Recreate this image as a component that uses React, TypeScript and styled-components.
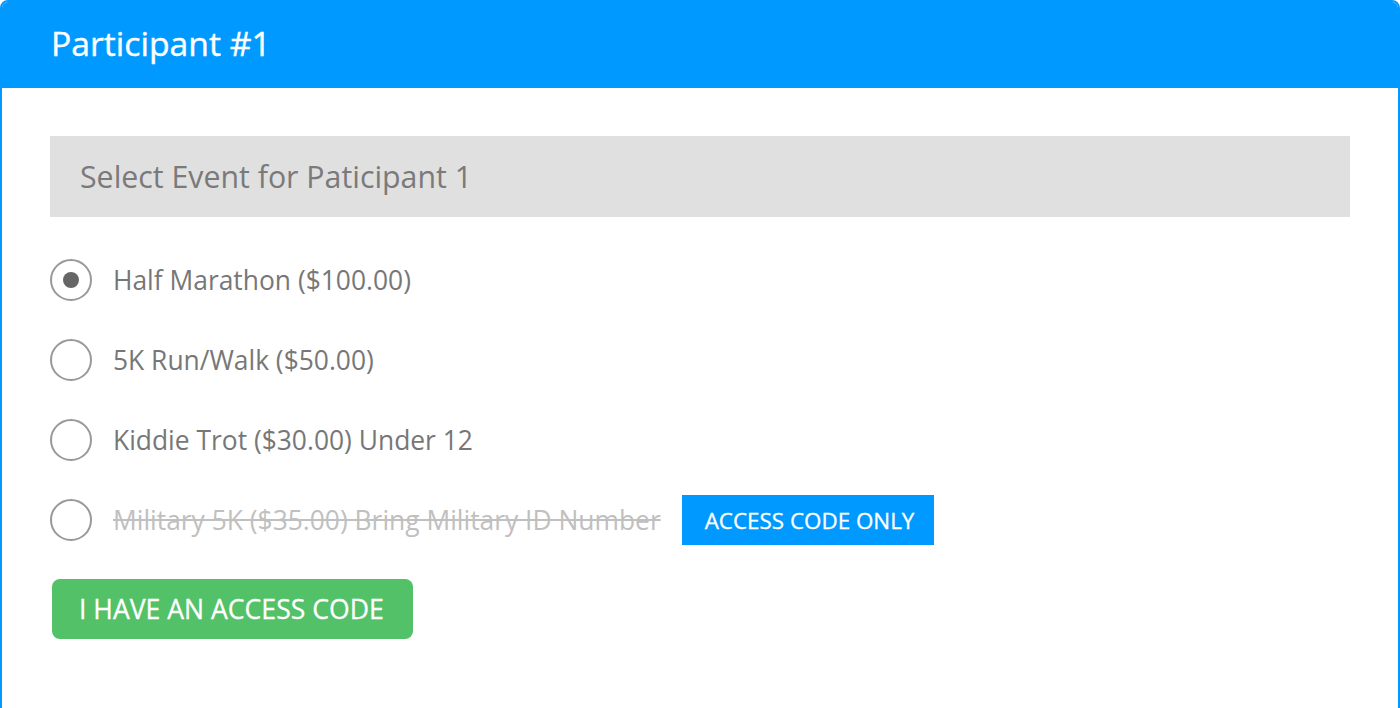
import styled, { createGlobalStyle } from "styled-components"

const GlobalStyle = createGlobalStyle`
  html, body {
    margin: 0;
    padding: 0;
    background: #ffffff;
    font-family: "Open Sans", "Noto Sans", sans-serif;
  }
`

type Option = {
  label: string
  checked?: boolean
  disabled?: boolean
}

const options: Option[] = [
  { label: "Half Marathon ($100.00)", checked: true },
  { label: "5K Run/Walk ($50.00)" },
  { label: "Kiddie Trot ($30.00) Under 12" },
  { label: "Military 5K ($35.00) Bring Military ID Number", disabled: true },
]

const App = () => {
  return (
    <>
      <GlobalStyle />
      <Card>
        <Header>
          <Title>Participant #1</Title>
        </Header>
        <Body>
          <SelectBar>Select Event for Paticipant 1</SelectBar>
          <List>
            {options.map((o) => (
              <Row key={o.label}>
                <Radio>{o.checked && <Dot />}</Radio>
                <Label $disabled={o.disabled}>{o.label}</Label>
                {o.disabled && <Badge>ACCESS CODE ONLY</Badge>}
              </Row>
            ))}
          </List>
          <CodeButton>I HAVE AN ACCESS CODE</CodeButton>
        </Body>
      </Card>
    </>
  )
}

export default App

const Card = styled.div`
  box-sizing: border-box;
  width: 1400px;
  height: 740px;
  border: 2px solid #0099ff;
  border-radius: 8px 8px 0 0;
  overflow: hidden;
`

const Header = styled.div`
  height: 86px;
  background: #0099ff;
  display: flex;
  align-items: center;
  padding-left: 49px;
  margin-top: -2px;
  padding-top: 2px;
`

const Title = styled.div`
  color: #ffffff;
  font-size: 33.7px;
  font-weight: 400;
  -webkit-text-stroke: 0.4px #ffffff;
  margin-top: -4px;
`

const Body = styled.div`
  padding: 48px 48px 0 48px;
`

const SelectBar = styled.div`
  height: 81px;
  background: #e0e0e0;
  display: flex;
  align-items: center;
  padding-left: 30px;
  font-size: 30.3px;
  color: #7a7a7a;
`

const List = styled.div`
  margin-top: 23px;
  display: flex;
  flex-direction: column;
`

const Row = styled.div`
  height: 80px;
  display: flex;
  align-items: center;
`

const Radio = styled.div`
  box-sizing: border-box;
  width: 42px;
  height: 42px;
  border: 2px solid #999999;
  border-radius: 50%;
  display: flex;
  align-items: center;
  justify-content: center;
  flex-shrink: 0;
`

const Dot = styled.div`
  width: 16px;
  height: 16px;
  border-radius: 50%;
  background: #666666;
`

const Label = styled.span<{ $disabled?: boolean }>`
  margin-left: 21px;
  padding-right: ${(p) => (p.$disabled ? "4px" : "0")};
  font-size: 26.4px;
  color: ${(p) => (p.$disabled ? "#c0c0c0" : "#777777")};
  text-decoration: ${(p) => (p.$disabled ? "line-through" : "none")};
`

const Badge = styled.span`
  margin-left: 17px;
  height: 50px;
  padding: 0 20px 0 23px;
  display: flex;
  align-items: center;
  background: #0099ff;
  color: #ffffff;
  font-size: 22.4px;
  -webkit-text-stroke: 0.3px #ffffff;
`

const CodeButton = styled.button`
  margin-top: 19px;
  margin-left: 2px;
  height: 60px;
  padding: 0 29px 0 27px;
  border: none;
  border-radius: 8px;
  background: #52c168;
  color: #ffffff;
  font-family: "Open Sans", "Noto Sans", sans-serif;
  font-size: 26.6px;
  -webkit-text-stroke: 0.3px #ffffff;
  cursor: pointer;
`
